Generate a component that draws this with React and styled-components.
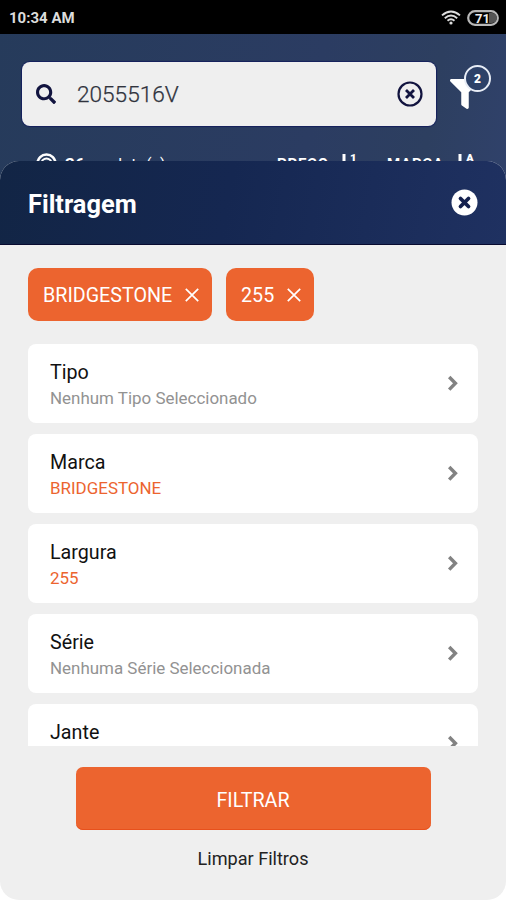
import React, { useState } from 'react';
import styled, { createGlobalStyle } from 'styled-components';
import { FaFilter, FaSearch } from 'react-icons/fa';

const GlobalStyle = createGlobalStyle`
	* {
		box-sizing: border-box;
	}
	body {
		margin: 0;
		background: #fff;
		font-family: Roboto, "Liberation Sans", sans-serif;
	}
	button {
		border: 0;
		padding: 0;
		background: none;
		font-family: inherit;
		cursor: pointer;
	}
	svg {
		display: block;
		flex: none;
	}
`;

const Screen = styled.div`
	width: 506px;
	height: 900px;
	display: flex;
	flex-direction: column;
	overflow: hidden;
	background: linear-gradient(to bottom, transparent 200px, #fff 200px), linear-gradient(100deg, #263b5b 0%, #2b3c62 50%, #2d3f60 68%, #34457a 100%);
`;

const StatusBar = styled.div`
	height: 34px;
	flex: none;
	display: flex;
	align-items: center;
	justify-content: space-between;
	padding: 1px 7px 0 9px;
	background: #000;
	color: #dcdcdc;
	font-size: 15px;
	font-weight: 700;
`;

const StatusIcons = styled.div`
	display: flex;
	align-items: center;
	gap: 6px;
`;

const TopBar = styled.div`
	height: 92px;
	flex: none;
	display: flex;
	align-items: flex-start;
	padding: 28px 16px 0 22px;
`;

const SearchBox = styled.div`
	width: 414px;
	height: 64px;
	display: flex;
	align-items: center;
	padding: 0 13px 0 14px;
	border-radius: 8px;
	background: #efefef;
	box-shadow: 0 0 1px 1px #14205c;
	color: #12143f;
`;

const SearchText = styled.span`
	flex: 1;
	margin-left: 21px;
	color: #30333d;
	font-size: 22.6px;
	font-weight: 300;
	-webkit-text-stroke: 0.25px currentColor;
`;

const FilterButton = styled.button`
	position: relative;
	margin: 17px 0 0 14px;
	color: #fff;
`;

const Badge = styled.span`
	position: absolute;
	left: 14px;
	top: -14px;
	width: 27px;
	height: 27px;
	display: flex;
	align-items: center;
	justify-content: center;
	border: 2px solid #e8edf6;
	border-radius: 50%;
	background: #2d4168;
	font-size: 12px;
	font-weight: 900;
`;

const ResultsBar = styled.div`
	height: 35px;
	flex: none;
	display: flex;
	align-items: flex-start;
	overflow: hidden;
	padding: 27px 32px 0 36px;
	color: #fff;
	font-size: 16px;
	line-height: 18px;
`;

const Count = styled.span`
	flex: 1;
	margin: 2px 0 0 8px;
	white-space: pre;
	letter-spacing: 0.2px;
	b {
		font-size: 17px;
	}
`;

const Sort = styled.span`
	display: flex;
	margin-left: ${(props) => props.$gap || 0}px;
	font-size: 15px;
	font-weight: 700;
	span {
		width: ${(props) => props.$width}px;
		margin-top: 2px;
		letter-spacing: 0.8px;
	}
`;

const Sheet = styled.section`
	flex: 1;
	min-height: 0;
	display: flex;
	flex-direction: column;
	overflow: hidden;
	border-radius: 19px;
	background: #efefef;
`;

const SheetHeader = styled.header`
	height: 84px;
	flex: none;
	display: flex;
	align-items: center;
	justify-content: space-between;
	padding: 0 28px;
	border-bottom: 1px solid #080b30;
	background: linear-gradient(100deg, #122545 0%, #152751 45%, #1f3161 100%);
	color: #fff;
`;

const Title = styled.h1`
	margin: 3px 0 0;
	font-size: 25.4px;
	font-weight: 700;
`;

const Chips = styled.div`
	flex: none;
	display: flex;
	gap: 14px;
	padding: 23px 28px;
`;

const Chip = styled.button`
	width: ${(props) => props.$width}px;
	height: 53px;
	display: flex;
	align-items: center;
	justify-content: space-between;
	padding: 0 13px 0 15px;
	border-radius: 10px;
	background: #ec642f;
	color: #fff;
	font-size: 19.7px;
	span {
		padding-top: 2px;
	}
`;

const FilterList = styled.div`
	flex: 1;
	min-height: 0;
	display: flex;
	flex-direction: column;
	gap: 11px;
	margin: 0 28px;
	overflow: hidden;
`;

const Card = styled.div`
	height: 79px;
	flex: none;
	display: flex;
	align-items: center;
	justify-content: space-between;
	padding: 0 19px 0 22px;
	border-radius: 8px;
	background: #fff;
	color: #828282;
`;

const CardText = styled.div`
	padding-top: 2px;
`;

const Label = styled.div`
	height: 26px;
	color: #111;
	font-size: 19.7px;
	line-height: 28px;
`;

const Value = styled.div`
	color: ${(props) => (props.$active ? '#ec642f' : '#929292')};
	font-size: 16.95px;
	line-height: 26px;
`;

const Footer = styled.footer`
	height: 154px;
	flex: none;
	display: flex;
	flex-direction: column;
	align-items: center;
	padding-top: 21px;
`;

const Submit = styled.button`
	width: 355px;
	height: 63px;
	padding-top: 4px;
	border-radius: 7px;
	background: #ec642f;
	box-shadow: inset 0 -1px #e8501c;
	color: #fff;
	font-size: 19.7px;
`;

const Clear = styled.button`
	margin-top: 18px;
	color: #222;
	font-size: 18.1px;
	line-height: 22px;
`;

const WifiIcon = () => (
	<svg width="20" height="15" viewBox="0 0 20 15" fill="none" stroke="#ddd" strokeWidth="1.9">
		<path d="M1 5.4Q10-2.4 19 5.4M3.8 8.2Q10 2.8 16.2 8.2M6.5 10.8Q10 7.8 13.5 10.8" />
		<circle cx="10" cy="13" r="1.6" fill="#ddd" stroke="none" />
	</svg>
);

const BatteryIcon = () => (
	<svg width="32" height="16" viewBox="0 0 32 16">
		<rect x="1.2" y="1.2" width="29.6" height="13.6" rx="6.8" fill="#000" stroke="#b8b8b8" strokeWidth="2.2" />
		<path d="M22 3h3a5 5 0 0 1 0 10h-3z" fill="#555" />
		<text x="15.5" y="12.5" fill="#eee" fontSize="13" fontWeight="700" textAnchor="middle">71</text>
	</svg>
);

const ClearIcon = () => (
	<svg width="26" height="26" viewBox="0 0 26 26" fill="none" stroke="currentColor">
		<circle cx="13" cy="13" r="11.5" strokeWidth="2.2" />
		<path d="M9 9l8 8M17 9l-8 8" strokeWidth="2.8" />
	</svg>
);

const CloseIcon = () => (
	<svg width="27" height="27" viewBox="0 0 27 27">
		<circle cx="13.5" cy="13.5" r="13" fill="currentColor" />
		<path d="M9.5 9.5l8 8M17.5 9.5l-8 8" stroke="#14204e" strokeWidth="3.8" strokeLinecap="round" />
	</svg>
);

const CrossIcon = () => (
	<svg width="14" height="14" viewBox="0 0 14 14" stroke="currentColor" strokeWidth="1.7">
		<path d="M.8.8l12.4 12.4M13.2.8L.8 13.2" />
	</svg>
);

const ChevronIcon = () => (
	<svg width="12" height="18" viewBox="0 0 12 18" fill="none" stroke="currentColor" strokeWidth="3.4">
		<path d="M2.2 2l6.2 6.3-6.2 6.3" />
	</svg>
);

const TyreIcon = () => (
	<svg width="21" height="21" viewBox="0 0 21 21" fill="none" stroke="currentColor">
		<circle cx="10.5" cy="10.5" r="9" strokeWidth="2.6" />
		<circle cx="10.5" cy="10.5" r="5" strokeWidth="2" />
	</svg>
);

const SortIcon = ({ letter }) => (
	<svg width="16" height="18" viewBox="0 0 16 18" fill="currentColor">
		<path d="M.5 1h3v10H6l-4 5-4-5H.5z" />
		<text x="8" y="9" fontSize="11.5" fontWeight="900">{letter}</text>
	</svg>
);

const filters = [
	{ label: 'Tipo', value: 'Nenhum Tipo Seleccionado' },
	{ label: 'Marca', value: 'BRIDGESTONE', active: true },
	{ label: 'Largura', value: '255', active: true },
	{ label: 'Série', value: 'Nenhuma Série Seleccionada' },
	{ label: 'Jante' },
];

const FilterCard = ({ filter }) => {

	const { label, value, active } = filter;

	return (
		<Card>
			<CardText>
				<Label>{label}</Label>
				<Value $active={active}>{value || '\u00a0'}</Value>
			</CardText>
			<ChevronIcon />
		</Card>
	)
}

const App = () => {

	const [chips, setChips] = useState([
		{ name: 'BRIDGESTONE', width: 184 },
		{ name: '255', width: 88 },
	]);

	const removeChip = (name) => setChips(chips.filter((el) => el.name !== name));

	return (
		<Screen>
			<GlobalStyle />
			<StatusBar>
				<span>10:34 AM</span>
				<StatusIcons>
					<WifiIcon />
					<BatteryIcon />
				</StatusIcons>
			</StatusBar>
			<TopBar>
				<SearchBox>
					<FaSearch size={20} />
					<SearchText>2055516V</SearchText>
					<ClearIcon />
				</SearchBox>
				<FilterButton>
					<FaFilter size={30} />
					<Badge>{chips.length}</Badge>
				</FilterButton>
			</TopBar>
			<ResultsBar>
				<TyreIcon />
				<Count><b>36</b> produto(s)</Count>
				<Sort $width={65}><span>PREÇO</span><SortIcon letter="1" /></Sort>
				<Sort $width={71} $gap={29}><span>MARCA</span><SortIcon letter="A" /></Sort>
			</ResultsBar>
			<Sheet>
				<SheetHeader>
					<Title>Filtragem</Title>
					<CloseIcon />
				</SheetHeader>
				<Chips>
					{chips.map((el) => (
						<Chip key={el.name} $width={el.width} onClick={() => removeChip(el.name)}>
							<span>{el.name}</span>
							<CrossIcon />
						</Chip>
					))}
				</Chips>
				<FilterList>
					{filters.map((el) => <FilterCard key={el.label} filter={el} />)}
				</FilterList>
				<Footer>
					<Submit>FILTRAR</Submit>
					<Clear onClick={() => setChips([])}>Limpar Filtros</Clear>
				</Footer>
			</Sheet>
		</Screen>
	)
}

export default App;
